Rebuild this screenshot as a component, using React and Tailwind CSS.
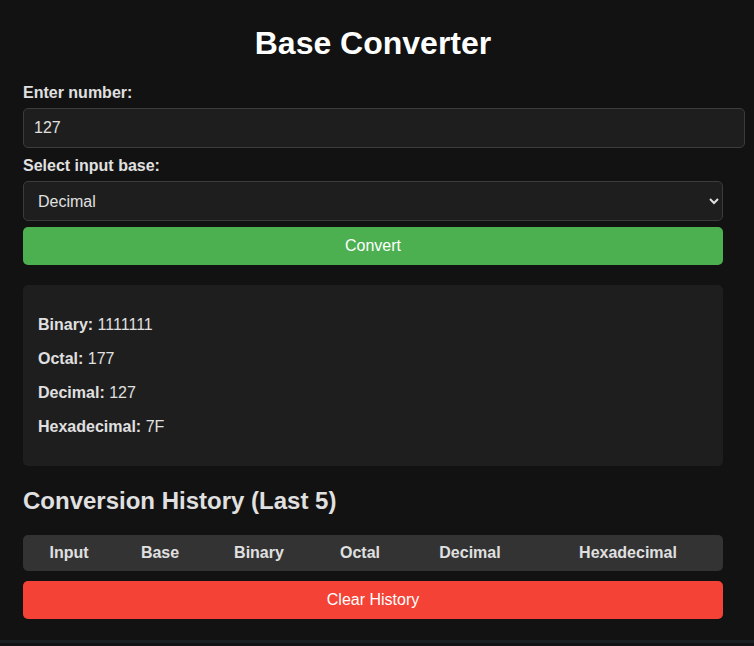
import React, { useState } from "react";

// Column widths for the history table (header only, no rows yet)
const COLS = [
  { label: "Input", w: "w-[92px]" },
  { label: "Base", w: "w-[90px]" },
  { label: "Binary", w: "w-[108px]" },
  { label: "Octal", w: "w-[94px]" },
  { label: "Decimal", w: "w-[126px]" },
  { label: "Hexadecimal", w: "w-[190px]" },
];

const RESULTS = [
  { label: "Binary", value: "1111111" },
  { label: "Octal", value: "177" },
  { label: "Decimal", value: "127" },
  { label: "Hexadecimal", value: "7F" },
];

export default function App() {
  const [num, setNum] = useState("127");
  const [base, setBase] = useState("10");

  return (
    <div className="min-h-[646px] bg-[#121212] text-[#e0e0e0] font-['Liberation_Sans',Arial,sans-serif]">
      <div className="h-[643px] border-b-[3px] border-[#1b1f22] pl-[23px] pr-[31px] pt-[25px]">
        <div className="w-[700px]">
          <h1 className="text-center text-[32px] leading-[37px] font-bold text-white">Base Converter</h1>

          <label className="mt-[22px] block text-base leading-[18px] font-bold">Enter number:</label>
          <input
            value={num}
            onChange={(e) => setNum(e.target.value)}
            className="mt-[6px] block w-[722px] h-[40px] px-[10px] bg-[#1e1e1e] border border-[#3c3c3c] rounded-[5px] text-base text-[#e0e0e0] outline-none"
          />

          <label className="mt-[9px] block text-base leading-[18px] font-bold">Select input base:</label>
          <select
            value={base}
            onChange={(e) => setBase(e.target.value)}
            className="mt-[6px] block w-[700px] h-[40px] px-[10px] bg-[#1e1e1e] border border-[#3c3c3c] rounded-[5px] text-base text-[#e0e0e0] outline-none"
          >
            <option value="2">Binary</option>
            <option value="8">Octal</option>
            <option value="10">Decimal</option>
            <option value="16">Hexadecimal</option>
          </select>

          <button className="mt-[6px] block w-full h-[38px] bg-[#4caf50] rounded-[5px] text-base text-white">
            Convert
          </button>

          <div className="mt-[20px] h-[181px] bg-[#1e1e1e] rounded-[5px] px-[15px] pt-[31px] flex flex-col gap-[16px]">
            {RESULTS.map((r) => (
              <p key={r.label} className="text-base leading-[18px]">
                <strong>{r.label}:</strong> {r.value}
              </p>
            ))}
          </div>

          <h2 className="mt-[21px] text-2xl leading-[28px] font-bold">Conversion History (Last 5)</h2>

          <table className="mt-[20px] w-full table-fixed border-collapse">
            <thead>
              <tr className="bg-[#333333]">
                {COLS.map((c, i) => (
                  <th
                    key={c.label}
                    className={`${c.w} h-[36px] text-base font-bold text-[#e0e0e0] text-center
                      ${i === 0 ? "rounded-l-[5px]" : ""}
                      ${i === COLS.length - 1 ? "rounded-r-[5px]" : ""}`}
                  >
                    {c.label}
                  </th>
                ))}
              </tr>
            </thead>
            <tbody></tbody>
          </table>

          <button className="mt-[10px] block w-full h-[38px] bg-[#f44336] rounded-[5px] text-base text-white">
            Clear History
          </button>
        </div>
      </div>
    </div>
  );
}
